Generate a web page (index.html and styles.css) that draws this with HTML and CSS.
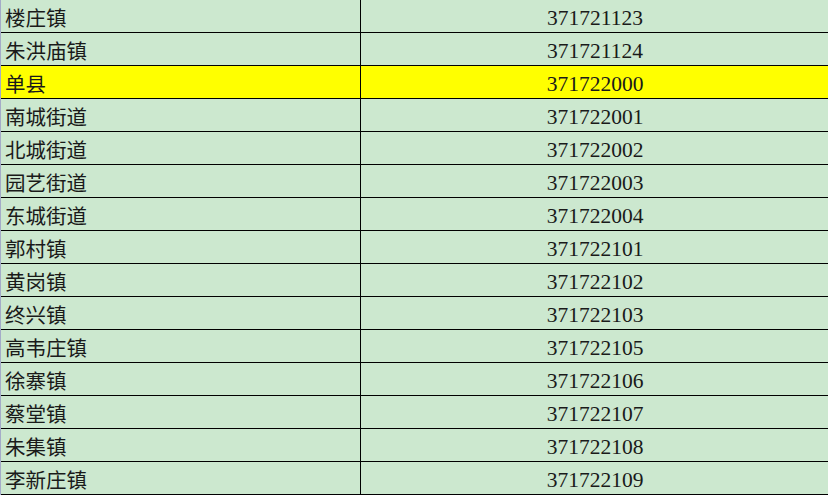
FILE: index.html
```html
<!DOCTYPE html>
<html lang="zh">
<head>
<meta charset="utf-8">
<link rel="stylesheet" href="styles.css">
</head>
<body>
<div class="sheet">
  <div class="row"><div class="name">楼庄镇</div><div class="code">371721123</div></div>
  <div class="row"><div class="name">朱洪庙镇</div><div class="code">371721124</div></div>
  <div class="row hl"><div class="name">单县</div><div class="code">371722000</div></div>
  <div class="row"><div class="name">南城街道</div><div class="code">371722001</div></div>
  <div class="row"><div class="name">北城街道</div><div class="code">371722002</div></div>
  <div class="row"><div class="name">园艺街道</div><div class="code">371722003</div></div>
  <div class="row"><div class="name">东城街道</div><div class="code">371722004</div></div>
  <div class="row"><div class="name">郭村镇</div><div class="code">371722101</div></div>
  <div class="row"><div class="name">黄岗镇</div><div class="code">371722102</div></div>
  <div class="row"><div class="name">终兴镇</div><div class="code">371722103</div></div>
  <div class="row"><div class="name">高韦庄镇</div><div class="code">371722105</div></div>
  <div class="row"><div class="name">徐寨镇</div><div class="code">371722106</div></div>
  <div class="row"><div class="name">蔡堂镇</div><div class="code">371722107</div></div>
  <div class="row"><div class="name">朱集镇</div><div class="code">371722108</div></div>
  <div class="row"><div class="name">李新庄镇</div><div class="code">371722109</div></div>
</div>
</body>
</html>
```
FILE: styles.css
```css
html, body {
  margin: 0;
  padding: 0;
  background: #cce8cf;
}
.sheet {
  width: 828px;
  height: 495px;
  overflow: hidden;
  background: #cce8cf;
}
.row {
  display: grid;
  grid-template-columns: 361px 1fr;
  height: 33px;
  box-sizing: border-box;
  border-bottom: 1px solid #000;
}
.row.hl {
  background: #ffff00;
}
.name {
  box-sizing: border-box;
  border-left: 1px solid #a4abc8;
  border-right: 1px solid #000;
  padding-left: 4px;
  padding-top: 1px;
  font-family: "Noto Sans CJK SC", "Noto Sans", sans-serif;
  font-size: 20.5px;
  line-height: 33px;
  color: #1a1a1a;
}
.code {
  text-align: center;
  padding-top: 1px;
  padding-left: 1px;
  font-family: "Liberation Serif", serif;
  font-size: 21.5px;
  line-height: 34px;
  color: #1a1a1a;
}
```
